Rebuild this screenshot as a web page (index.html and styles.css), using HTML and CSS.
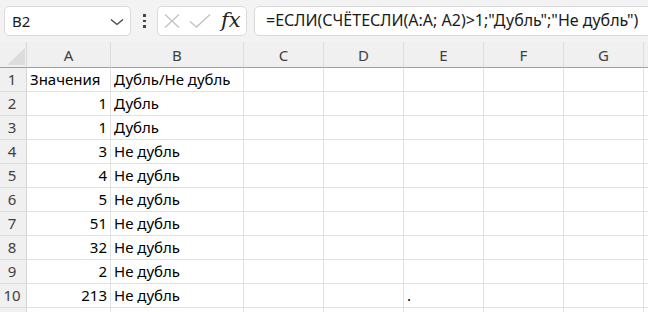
FILE: index.html
```html
<!DOCTYPE html>
<html lang="ru">
<head>
<meta charset="utf-8">
<title>Excel</title>
<link rel="stylesheet" href="styles.css">
</head>
<body>
<div class="app">
  <div class="toolbar">
    <div class="namebox">
      <span class="name">B2</span>
      <svg class="chev" width="14" height="8" viewBox="0 0 14 8"><path d="M1 1.5 L7 6.5 L13 1.5" fill="none" stroke="#404040" stroke-width="1.3"/></svg>
    </div>
    <div class="dots"><i></i><i></i><i></i></div>
    <div class="fxbox">
      <svg class="ico" width="18" height="16" viewBox="0 0 18 16"><path d="M2 1.5 L16 14.5 M16 1.5 L2 14.5" fill="none" stroke="#c4c4c4" stroke-width="1.4"/></svg>
      <svg class="ico" width="22" height="16" viewBox="0 0 22 16"><path d="M1 8.5 L7.5 14 L21 1.5" fill="none" stroke="#c4c4c4" stroke-width="1.4"/></svg>
      <span class="fx">fx</span>
    </div>
    <div class="formula">=ЕСЛИ(СЧЁТЕСЛИ(A:A; A2)&gt;1;"Дубль";"Не дубль")</div>
  </div>
  <div class="sheet">
    <div class="corner"><svg width="18" height="17" viewBox="0 0 18 17"><path d="M18 0 L18 17 L0 17 Z" fill="#dcdcdc"/></svg></div>
    <div class="ch">A</div><div class="ch">B</div><div class="ch">C</div><div class="ch">D</div><div class="ch">E</div><div class="ch">F</div><div class="ch">G</div><div class="ch"></div>

    <div class="rh">1</div><div class="c">Значения</div><div class="c">Дубль/Не дубль</div><div class="c"></div><div class="c"></div><div class="c"></div><div class="c"></div><div class="c"></div><div class="c"></div>
    <div class="rh">2</div><div class="c n">1</div><div class="c">Дубль</div><div class="c"></div><div class="c"></div><div class="c"></div><div class="c"></div><div class="c"></div><div class="c"></div>
    <div class="rh">3</div><div class="c n">1</div><div class="c">Дубль</div><div class="c"></div><div class="c"></div><div class="c"></div><div class="c"></div><div class="c"></div><div class="c"></div>
    <div class="rh">4</div><div class="c n">3</div><div class="c">Не дубль</div><div class="c"></div><div class="c"></div><div class="c"></div><div class="c"></div><div class="c"></div><div class="c"></div>
    <div class="rh">5</div><div class="c n">4</div><div class="c">Не дубль</div><div class="c"></div><div class="c"></div><div class="c"></div><div class="c"></div><div class="c"></div><div class="c"></div>
    <div class="rh">6</div><div class="c n">5</div><div class="c">Не дубль</div><div class="c"></div><div class="c"></div><div class="c"></div><div class="c"></div><div class="c"></div><div class="c"></div>
    <div class="rh">7</div><div class="c n">51</div><div class="c">Не дубль</div><div class="c"></div><div class="c"></div><div class="c"></div><div class="c"></div><div class="c"></div><div class="c"></div>
    <div class="rh">8</div><div class="c n">32</div><div class="c">Не дубль</div><div class="c"></div><div class="c"></div><div class="c"></div><div class="c"></div><div class="c"></div><div class="c"></div>
    <div class="rh">9</div><div class="c n">2</div><div class="c">Не дубль</div><div class="c"></div><div class="c"></div><div class="c"></div><div class="c"></div><div class="c"></div><div class="c"></div>
    <div class="rh">10</div><div class="c n">213</div><div class="c">Не дубль</div><div class="c"></div><div class="c"></div><div class="c">.</div><div class="c"></div><div class="c"></div><div class="c"></div>
    <div class="rh"></div><div class="c"></div><div class="c"></div><div class="c"></div><div class="c"></div><div class="c"></div><div class="c"></div><div class="c"></div><div class="c"></div>
  </div>
</div>
</body>
</html>
```
FILE: styles.css
```css
* { box-sizing: border-box; }
html, body { margin: 0; padding: 0; }
body {
  width: 648px;
  height: 312px;
  overflow: hidden;
  background: #ffffff;
  font-family: "Noto Sans", "Open Sans", sans-serif;
}
.app { width: 648px; height: 312px; overflow: hidden; }

.toolbar {
  height: 42px;
  background: #f3f3f3;
  display: flex;
  align-items: flex-start;
  padding: 6px 0 0 4px;
  overflow: hidden;
}
.namebox {
  width: 127px;
  height: 30px;
  flex: none;
  background: #fff;
  border: 1px solid #dadada;
  border-radius: 5px;
  display: flex;
  align-items: center;
  justify-content: space-between;
  padding: 0 6px 0 7px;
}
.name { font-size: 15px; color: #1a1a1a; }
.chev { display: block; margin-top: 2px; }

.dots {
  width: 26px;
  height: 30px;
  flex: none;
  display: flex;
  flex-direction: column;
  align-items: center;
  justify-content: center;
  gap: 3px;
}
.dots i { display: block; width: 3px; height: 2.5px; background: #444; }

.fxbox {
  width: 90px;
  height: 30px;
  flex: none;
  background: #fff;
  border: 1px solid #dadada;
  border-radius: 5px;
  display: flex;
  align-items: center;
  padding: 0 0 0 5px;
  gap: 8px;
}
.ico { display: block; }
.fx {
  font-family: "DejaVu Serif", "Liberation Serif", serif;
  font-style: italic;
  font-size: 21px;
  color: #222;
  margin-left: 2px;
  line-height: 1;
  margin-top: -2px;
}
.formula {
  flex: none;
  width: 440px;
  height: 30px;
  margin-left: 7px;
  background: #fff;
  border: 1px solid #dadada;
  border-radius: 5px;
  font-size: 16px;
  color: #1a1a1a;
  padding: 2px 0 0 11px;
  white-space: nowrap;
}

.sheet {
  display: grid;
  grid-template-columns: 27px 84px 133px 80px 80px 80px 80px 80px 80px;
  grid-template-rows: 26px repeat(11, 24px);
  font-size: 15px;
}
.corner {
  background: #f0f0f0;
  border-right: 1px solid #d8d8d8;
  border-bottom: 1px solid #9e9e9e;
  display: flex;
  align-items: flex-end;
  justify-content: flex-end;
  padding: 0 1px 2px 0;
}
.corner svg { display: block; }
.ch {
  background: #f0f0f0;
  border-right: 1px solid #dcdcdc;
  border-bottom: 1px solid #9e9e9e;
  color: #404040;
  text-align: center;
  line-height: 25px;
  padding-top: 1px;
}
.rh {
  background: #f0f0f0;
  border-right: 1px solid #d4d4d4;
  border-bottom: 1px solid #dcdcdc;
  color: #404040;
  text-align: center;
  padding-right: 2px;
  line-height: 23px;
}
.c {
  border-right: 1px solid #e1e1e1;
  border-bottom: 1px solid #e1e1e1;
  color: #000;
  padding: 0 3px;
  line-height: 23px;
  white-space: nowrap;
  overflow: hidden;
}
.c.n { text-align: right; }
```
